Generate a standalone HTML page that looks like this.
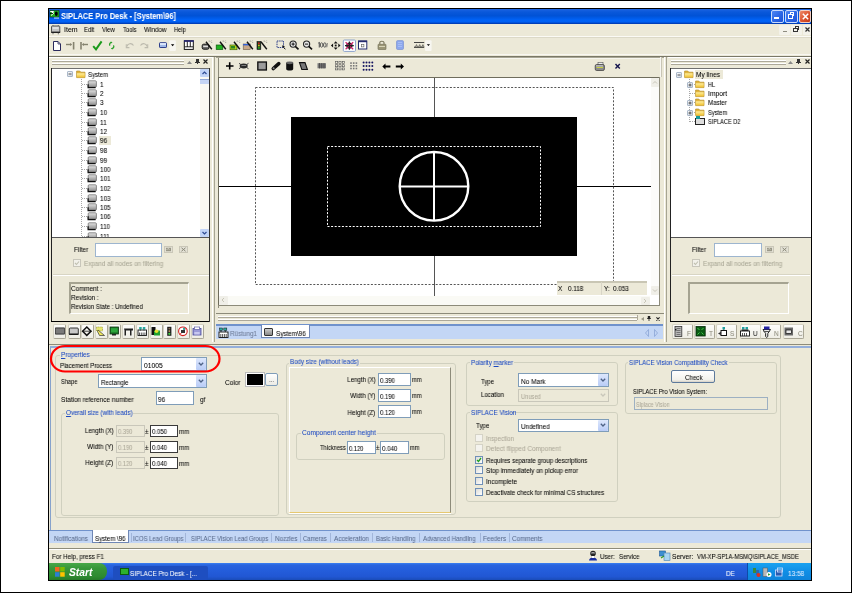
<!DOCTYPE html>
<html><head><meta charset="utf-8">
<style>
*{margin:0;padding:0;box-sizing:border-box}
html,body{width:852px;height:593px;overflow:hidden;background:#fff;font-family:"Liberation Sans",sans-serif;color:#000}
.a{position:absolute}
.t{position:absolute;white-space:nowrap;line-height:1;will-change:transform;-webkit-text-stroke:.05px currentColor}
svg{overflow:visible}
</style></head><body>
<div class="a" style="left:0;top:0;width:852px;height:593px;border:1px solid #000"></div>
<div class="a" style="left:48px;top:8px;width:764px;height:573px;background:#ECE9D8;border:1px solid #000"></div>
<div class="a" style="left:49px;top:9px;width:762px;height:15px;background:linear-gradient(#1C64E2 0,#0A58DA 20%,#0052D6 45%,#0062F6 72%,#0060F4 86%,#0040BC 96%,#0034A8 100%)"></div>
<svg class="a" style="left:49px;top:10px;" width="11" height="9" viewBox="0 0 11 9"><rect x="1" y=".6" width="9" height="6.4" fill="#22B022" stroke="#0A3A0A" stroke-width=".6"/><ellipse cx="7.3" cy="3.8" rx="1.5" ry="2.2" fill="#000"/><path d="M1.2 1.5H4.5L2.8 3H4.8L2 5.5" stroke="#fff" stroke-width="1" fill="none"/><path d="M1 3.5L4 3.5" stroke="#000" stroke-width=".8"/><rect x="5" y="7.6" width="5" height=".9" fill="#DDEEFF"/></svg>
<div class="t" style="left:61.2px;top:13.06px;font-size:8.2px;transform:scaleX(0.908);transform-origin:0 0;color:#fff;font-weight:bold">SIPLACE Pro Desk - [System\96]</div>
<div class="a" style="left:771px;top:10px;width:13px;height:13px;background:linear-gradient(135deg,#4E86F2,#2A66E6 55%,#1E52D4);border:1px solid #C8DAFC;border-radius:2px"></div>
<div class="a" style="left:785px;top:10px;width:13px;height:13px;background:linear-gradient(135deg,#4E86F2,#2A66E6 55%,#1E52D4);border:1px solid #C8DAFC;border-radius:2px"></div>
<div class="a" style="left:799px;top:10px;width:12px;height:13px;background:linear-gradient(135deg,#EC8A6A,#DD5530 55%,#C23A18);border:1px solid #F4D0C4;border-radius:2px"></div>
<div class="a" style="left:774px;top:17px;width:4.5px;height:2px;background:#fff"></div>
<div class="a" style="left:790px;top:12px;width:4px;height:4px;border:1px solid #fff;border-top-width:1px"></div>
<div class="a" style="left:788px;top:14px;width:4.5px;height:4.5px;background:#2A66E6;border:1px solid #fff;border-top-width:1px"></div>
<svg class="a" style="left:801px;top:12px;" width="9" height="9" viewBox="0 0 9 9"><path d="M1.8 1.8L7.2 7.2M7.2 1.8L1.8 7.2" stroke="#fff" stroke-width="1.5"/></svg>
<div class="a" style="left:49px;top:36px;width:762px;height:1px;background:#FBFAF5"></div>
<div class="a" style="left:49px;top:37px;width:762px;height:1px;background:#DCD9C8"></div>
<svg class="a" style="left:50px;top:24px;" width="11" height="11" viewBox="0 0 11 11"><rect x="1.5" y="2" width="8.3" height="6.5" rx=".8" fill="#C4C4C4" stroke="#555" stroke-width="1"/><rect x="1.2" y="7.6" width="9" height="1.4" fill="#222"/><path d="M3 1V2M8.3 1V2M3 9V10.3M8.3 9V10.3" stroke="#666" stroke-width=".9"/><rect x="2.6" y="3" width="6" height="2" fill="#E0E0E0"/></svg>
<div class="t" style="left:63.5px;top:26.07px;font-size:7px;transform:scaleX(0.999);transform-origin:0 0;">Item</div>
<div class="t" style="left:83.7px;top:26.07px;font-size:7px;transform:scaleX(0.854);transform-origin:0 0;">Edit</div>
<div class="t" style="left:102px;top:26.07px;font-size:7px;transform:scaleX(0.844);transform-origin:0 0;">View</div>
<div class="t" style="left:122.7px;top:26.07px;font-size:7px;transform:scaleX(0.832);transform-origin:0 0;">Tools</div>
<div class="t" style="left:144.3px;top:26.07px;font-size:7px;transform:scaleX(0.904);transform-origin:0 0;">Window</div>
<div class="t" style="left:173.8px;top:26.07px;font-size:7px;transform:scaleX(0.820);transform-origin:0 0;">Help</div>
<div class="a" style="left:779px;top:25px;width:11px;height:10px;background:#F3F2EA;border-radius:1px"></div>
<div class="a" style="left:791px;top:25px;width:11px;height:10px;background:#F3F2EA;border-radius:1px"></div>
<div class="a" style="left:803px;top:25px;width:8px;height:10px;background:#F3F2EA;border-radius:1px"></div>
<div class="a" style="left:783px;top:30.5px;width:3.5px;height:1px;background:#8E8C80"></div>
<div class="a" style="left:795px;top:26px;width:4px;height:4px;border:1px solid #333;border-top-width:1.5px"></div>
<div class="a" style="left:793px;top:27.5px;width:4.5px;height:4px;background:#F3F2EA;border:1px solid #333;border-top-width:1.5px"></div>
<svg class="a" style="left:804.5px;top:26.5px;" width="5" height="5" viewBox="0 0 5 5"><path d="M.5 .5L4.5 4.5M4.5 .5L.5 4.5" stroke="#333" stroke-width="1.2"/></svg>
<div class="a" style="left:49px;top:54px;width:762px;height:1px;background:#F8F7F2"></div>
<div class="a" style="left:49px;top:56px;width:762px;height:1px;background:#7A7868"></div>
<svg class="a" style="left:0;top:0" width="852" height="60" viewBox="0 0 852 60"><path d="M53.5 41.5H58L60.5 44V50.5H53.5Z" fill="#fff" stroke="#2B2B5E" stroke-width="1"/><path d="M58 41.5V44H60.5" fill="none" stroke="#2B2B5E" stroke-width=".8"/><path d="M66 44.5H71.5" stroke="#85836F" stroke-width="1.4"/><path d="M70 43L72 44.5L70 46Z" fill="#85836F"/><rect x="72.8" y="42" width="1.6" height="7.5" fill="#85836F"/><rect x="80.2" y="42" width="1.6" height="7.5" fill="#85836F"/><path d="M82.5 44.5H88" stroke="#85836F" stroke-width="1.4"/><path d="M84 43L82 44.5L84 46Z" fill="#85836F"/><path d="M93.2 46.2L96 49.3L101.6 41.4" fill="none" stroke="#1B9A1B" stroke-width="2"/><path d="M111.7 42.3C109.5 42.5 109.2 44.7 110 45.6M111.7 48.6C113.9 48.4 114.2 46.3 113.4 45.3" fill="none" stroke="#2AA02A" stroke-width="1.3"/><path d="M110.6 41.5L112.6 42.4L110.8 43.5Z M112.8 49.4L110.8 48.5L112.6 47.4Z" fill="#2AA02A"/><path d="M127 46.5C127.5 43.5 131.5 42.5 133.5 45.5" fill="none" stroke="#BDBBAE" stroke-width="1.2"/><path d="M126.3 44.3V47.6H129.4" fill="none" stroke="#BDBBAE" stroke-width="1.1"/><path d="M147 46.5C146.5 43.5 142.5 42.5 140.5 45.5" fill="none" stroke="#BDBBAE" stroke-width="1.2"/><path d="M147.7 44.3V47.6H144.6" fill="none" stroke="#BDBBAE" stroke-width="1.1"/><rect x="159.5" y="42.7" width="7" height="4.8" rx=".6" fill="#9FB8E8" stroke="#2E3F8A" stroke-width="1"/><rect x="160" y="43.2" width="6" height="1.6" fill="#E8F0FF"/><rect x="169.3" y="40.3" width="6.6" height="10.8" rx="1" fill="#F7F6F1"/><path d="M170.9 44.3H174.3L172.6 46.2Z" fill="#000"/><rect x="184.3" y="40.8" width="9" height="8.6" fill="#fff" stroke="#111" stroke-width="1"/><rect x="184" y="40.3" width="9.7" height="1.5" fill="#1E1E78"/><path d="M187.3 41.5V47M190.3 41.5V47M184.5 46.8H193" stroke="#111" stroke-width=".9"/><rect x="202.2" y="44.2" width="6.8" height="5" rx="1.5" fill="#6F6F6F" stroke="#111" stroke-width="1"/><rect x="203.2" y="45.7" width="4.8" height="1.3" fill="#ddd"/><path d="M206 41.8L211.8 49.3" stroke="#111" stroke-width="1.4"/><path d="M209.2 40.5V41.8M211.2 42.4H212.2M211.5 40.6L210.8 41.3" stroke="#666" stroke-width=".6"/><rect x="216.2" y="45" width="6.6" height="4.5" fill="#20B020" stroke="#0A5A0A" stroke-width=".7"/><path d="M220 41.8L225.8 49.3" stroke="#111" stroke-width="1.4"/><path d="M223.2 40.5V41.8M225.2 42.4H226.2M225.5 40.6L224.8 41.3" stroke="#666" stroke-width=".6"/><rect x="230" y="45" width="7" height="4.7" fill="#B8D020" stroke="#3A6A0A" stroke-width=".7"/><rect x="231" y="46" width="4" height="2.5" fill="#2B8A20"/><path d="M234 41.8L239.8 49.3" stroke="#111" stroke-width="1.4"/><path d="M237.2 40.5V41.8M239.2 42.4H240.2M239.5 40.6L238.8 41.3" stroke="#666" stroke-width=".6"/><rect x="243.2" y="44" width="7" height="5.6" fill="#C8A888" stroke="#6A5A4A" stroke-width=".6"/><rect x="243.2" y="44" width="7" height="1.4" fill="#3060D8"/><path d="M247 41.8L252.8 49.3" stroke="#111" stroke-width="1.4"/><path d="M250.2 40.5V41.8M252.2 42.4H253.2M252.5 40.6L251.8 41.3" stroke="#666" stroke-width=".6"/><rect x="257" y="41.5" width="3.8" height="8" fill="#1D3A1D" stroke="#111" stroke-width=".6"/><circle cx="258.9" cy="43.2" r=".9" fill="#D02020"/><circle cx="258.9" cy="45.5" r=".9" fill="#E0C020"/><circle cx="258.9" cy="47.8" r=".9" fill="#20C020"/><path d="M261 41.8L266.8 49.3" stroke="#111" stroke-width="1.4"/><path d="M264.2 40.5V41.8M266.2 42.4H267.2M266.5 40.6L265.8 41.3" stroke="#666" stroke-width=".6"/><rect x="277" y="41" width="6.5" height="6.5" fill="none" stroke="#2E3F8A" stroke-width="1" stroke-dasharray="1.4,.8"/><path d="M282.5 46L285.3 49.3" stroke="#111" stroke-width="1"/><path d="M282 45.3L285 46.5L283.2 47.6Z" fill="#111"/><circle cx="293.1" cy="44.1" r="3.1" fill="#E8E8E8" stroke="#222" stroke-width="1.1"/><path d="M295.3 46.4L298.5 49.4" stroke="#111" stroke-width="1.7"/><path d="M291.5 44.1H294.7" stroke="#111" stroke-width="1"/><path d="M293.1 42.5V45.7" stroke="#111" stroke-width="1"/><circle cx="306.6" cy="44.1" r="3.1" fill="#E8E8E8" stroke="#222" stroke-width="1.1"/><path d="M308.8 46.4L312 49.4" stroke="#111" stroke-width="1.7"/><path d="M305 44.1H308.2" stroke="#111" stroke-width="1"/><path d="M318.3 43.2L319.3 42.6V47.5" stroke="#555" stroke-width="1.1" fill="none"/><ellipse cx="321.6" cy="45" rx="1.3" ry="2.2" fill="none" stroke="#555" stroke-width="1"/><ellipse cx="324.8" cy="45" rx="1.3" ry="2.2" fill="none" stroke="#555" stroke-width="1"/><path d="M326.8 47.3L327.4 43" stroke="#555" stroke-width=".7"/><path d="M335.7 41.3L337.7 43.5H333.7Z M335.7 49.7L337.7 47.5H333.7Z M330.9 45.5L333.1 43.5V47.5Z M340.5 45.5L338.3 43.5V47.5Z" fill="#111"/><rect x="334.8" y="44.6" width="1.8" height="1.8" fill="#111"/><rect x="343.3" y="40" width="12.2" height="11.4" rx="1" fill="#fff" stroke="#8BA2CC" stroke-width="1"/><circle cx="349.4" cy="45.6" r="3.2" fill="#222"/><path d="M345.6 42.2L353.2 49.2M353.2 42.2L345.6 49.2" stroke="#D0206A" stroke-width="1.2"/><path d="M349.4 41.4V49.8M345 45.6H353.8" stroke="#222" stroke-width="1.2"/><rect x="358.5" y="41" width="8.3" height="8" fill="#fff" stroke="#232A6E" stroke-width="1"/><rect x="358.3" y="40.6" width="8.7" height="1.6" fill="#232A6E"/><rect x="361.3" y="44.3" width="2.6" height="2.6" fill="none" stroke="#555" stroke-width=".6"/><path d="M379.8 44.5V42.6C379.8 40.8 384 40.8 384 42.6V44.5" fill="none" stroke="#7D7A60" stroke-width="1.2"/><rect x="378" y="44.3" width="8" height="5.2" rx=".5" fill="#9C9777" stroke="#6D6A50" stroke-width=".6"/><rect x="379" y="46" width="6" height="1" fill="#D8D4B8"/><rect x="396.5" y="40.6" width="7" height="8.9" rx="1.2" fill="#8DA8EE" stroke="#7C93D0" stroke-width=".7"/><path d="M398 42.5H402M398 44.5H402M398 46.5H402" stroke="#B8CBF7" stroke-width=".6"/><rect x="414" y="42" width="10.2" height="1" fill="#444"/><rect x="414" y="46.7" width="10.2" height="1" fill="#111"/><path d="M415.5 46.7L416.5 44.6L417.5 46.7M418.7 46.7L419.7 44.6L420.7 46.7M421.9 46.7L422.9 44.6L423.9 46.7" fill="none" stroke="#333" stroke-width=".6"/><rect x="425" y="40.3" width="6.6" height="10.7" rx="1" fill="#F7F6F1"/><path d="M426.8 44.3H430L428.4 46.1Z" fill="#000"/></svg>
<div class="a" style="left:49px;top:57px;width:163px;height:1px;background:#FFFFFF"></div>
<div class="a" style="left:52px;top:60px;width:132px;height:1px;background:#FFFFFF"></div>
<div class="a" style="left:52px;top:61px;width:132px;height:1px;background:#ACA899"></div>
<div class="a" style="left:52px;top:63px;width:132px;height:1px;background:#FFFFFF"></div>
<div class="a" style="left:52px;top:64px;width:132px;height:1px;background:#ACA899"></div>
<svg class="a" style="left:187px;top:61px;" width="5" height="3" viewBox="0 0 5 3"><path d="M0 3L2.5 0L5 3Z" fill="#888"/></svg>
<svg class="a" style="left:195px;top:59px;" width="5" height="5" viewBox="0 0 5 5"><path d="M1 0H4V3H5V4H3V5H2V4H0V3H1Z" fill="#333"/></svg>
<svg class="a" style="left:203px;top:59px;" width="5" height="5" viewBox="0 0 5 5"><path d="M.5 .5L4.5 4.5M4.5 .5L.5 4.5" stroke="#222" stroke-width="1.2"/></svg>
<div class="a" style="left:51px;top:68px;width:159px;height:170px;background:#fff;border-top:1px solid #6F6F6F;border-left:1px solid #222;border-right:1px solid #777"></div>
<div class="a" style="left:200px;top:69px;width:9px;height:168px;background:#FAF9F3"></div>
<div class="a" style="left:200px;top:69px;width:9px;height:8px;background:#C2D4F7;border-radius:1px"></div>
<svg class="a" style="left:201px;top:70px;" width="7" height="6" viewBox="0 0 7 6"><path d="M1.5 4L3.5 2L5.5 4" stroke="#2E4C95" stroke-width="1.2" fill="none"/></svg>
<div class="a" style="left:200px;top:79px;width:9px;height:5px;background:#C5D5F5;border-top:1px solid #8FA6D6"></div>
<div class="a" style="left:200px;top:229px;width:9px;height:8px;background:#C2D4F7;border-radius:1px"></div>
<svg class="a" style="left:201px;top:230px;" width="7" height="6" viewBox="0 0 7 6"><path d="M1.5 2L3.5 4L5.5 2" stroke="#2E4C95" stroke-width="1.2" fill="none"/></svg>
<svg width="0" height="0" style="position:absolute"><defs><linearGradient id="fg" x1="0" y1="0" x2="0" y2="1"><stop offset="0" stop-color="#FFF0A0"/><stop offset="1" stop-color="#F0C030"/></linearGradient><linearGradient id="mg" x1="0" y1="0" x2="0" y2="1"><stop offset="0" stop-color="#E4E4E4"/><stop offset="1" stop-color="#8C8C8C"/></linearGradient><linearGradient id="pg" x1="0" y1="0" x2="1" y2="1"><stop offset="0" stop-color="#FFFFFF"/><stop offset="1" stop-color="#C8D0DC"/></linearGradient></defs></svg>
<svg class="a" style="left:67px;top:71px;" width="6" height="6" viewBox="0 0 6 6"><rect x=".5" y=".5" width="5" height="5" rx=".5" fill="url(#pg)" stroke="#98A8BC" stroke-width=".8"/><path d="M1.5 3H4.5" stroke="#444" stroke-width=".9"/></svg>
<svg class="a" style="left:76px;top:70px;" width="9" height="8" viewBox="0 0 9 8"><path d="M.6 1H3.8L4.8 2.2H9V7.6H.6Z" fill="#E2B53C" stroke="#B8902A" stroke-width=".7"/><path d="M.9 3.3H8.7V7.3H.9Z" fill="url(#fg)"/></svg>
<div class="t" style="left:88.3px;top:72.21px;font-size:6.6px;transform:scaleX(0.913);transform-origin:0 0;">System</div>
<div class="a" style="left:81px;top:79px;width:1px;height:158px;background:repeating-linear-gradient(#A8A8A8 0 1px,transparent 1px 2px)"></div>
<div class="a" style="left:82px;top:84px;width:5px;height:1px;background:repeating-linear-gradient(90deg,#A8A8A8 0 1px,transparent 1px 2px)"></div>
<svg class="a" style="left:87px;top:80px;" width="10" height="9" viewBox="0 0 10 9"><rect x="1.2" y=".8" width="8.2" height="6.4" rx="1" fill="url(#mg)" stroke="#606060" stroke-width=".7"/><path d="M1.1 4.3V7.6H8.6" fill="none" stroke="#111" stroke-width="1.2"/></svg>
<div class="t" style="left:99.5px;top:82.41px;font-size:6.6px;transform:scaleX(0.955);transform-origin:0 0;">1</div>
<div class="a" style="left:82px;top:93px;width:5px;height:1px;background:repeating-linear-gradient(90deg,#A8A8A8 0 1px,transparent 1px 2px)"></div>
<svg class="a" style="left:87px;top:89px;" width="10" height="9" viewBox="0 0 10 9"><rect x="1.2" y=".8" width="8.2" height="6.4" rx="1" fill="url(#mg)" stroke="#606060" stroke-width=".7"/><path d="M1.1 4.3V7.6H8.6" fill="none" stroke="#111" stroke-width="1.2"/></svg>
<div class="t" style="left:99.5px;top:91.41px;font-size:6.6px;transform:scaleX(0.955);transform-origin:0 0;">2</div>
<div class="a" style="left:82px;top:102px;width:5px;height:1px;background:repeating-linear-gradient(90deg,#A8A8A8 0 1px,transparent 1px 2px)"></div>
<svg class="a" style="left:87px;top:98px;" width="10" height="9" viewBox="0 0 10 9"><rect x="1.2" y=".8" width="8.2" height="6.4" rx="1" fill="url(#mg)" stroke="#606060" stroke-width=".7"/><path d="M1.1 4.3V7.6H8.6" fill="none" stroke="#111" stroke-width="1.2"/></svg>
<div class="t" style="left:99.5px;top:100.41px;font-size:6.6px;transform:scaleX(0.955);transform-origin:0 0;">3</div>
<div class="a" style="left:82px;top:112px;width:5px;height:1px;background:repeating-linear-gradient(90deg,#A8A8A8 0 1px,transparent 1px 2px)"></div>
<svg class="a" style="left:87px;top:108px;" width="10" height="9" viewBox="0 0 10 9"><rect x="1.2" y=".8" width="8.2" height="6.4" rx="1" fill="url(#mg)" stroke="#606060" stroke-width=".7"/><path d="M1.1 4.3V7.6H8.6" fill="none" stroke="#111" stroke-width="1.2"/></svg>
<div class="t" style="left:99.5px;top:110.41px;font-size:6.6px;transform:scaleX(0.955);transform-origin:0 0;">10</div>
<div class="a" style="left:82px;top:122px;width:5px;height:1px;background:repeating-linear-gradient(90deg,#A8A8A8 0 1px,transparent 1px 2px)"></div>
<svg class="a" style="left:87px;top:118px;" width="10" height="9" viewBox="0 0 10 9"><rect x="1.2" y=".8" width="8.2" height="6.4" rx="1" fill="url(#mg)" stroke="#606060" stroke-width=".7"/><path d="M1.1 4.3V7.6H8.6" fill="none" stroke="#111" stroke-width="1.2"/></svg>
<div class="t" style="left:99.5px;top:120.41px;font-size:6.6px;transform:scaleX(0.955);transform-origin:0 0;">11</div>
<div class="a" style="left:82px;top:131px;width:5px;height:1px;background:repeating-linear-gradient(90deg,#A8A8A8 0 1px,transparent 1px 2px)"></div>
<svg class="a" style="left:87px;top:127px;" width="10" height="9" viewBox="0 0 10 9"><rect x="1.2" y=".8" width="8.2" height="6.4" rx="1" fill="url(#mg)" stroke="#606060" stroke-width=".7"/><path d="M1.1 4.3V7.6H8.6" fill="none" stroke="#111" stroke-width="1.2"/></svg>
<div class="t" style="left:99.5px;top:129.41px;font-size:6.6px;transform:scaleX(0.955);transform-origin:0 0;">12</div>
<div class="a" style="left:82px;top:140px;width:5px;height:1px;background:repeating-linear-gradient(90deg,#A8A8A8 0 1px,transparent 1px 2px)"></div>
<div class="a" style="left:98.5px;top:136px;width:12px;height:9px;background:#ECE9D8"></div>
<svg class="a" style="left:87px;top:136px;" width="10" height="9" viewBox="0 0 10 9"><rect x="1.2" y=".8" width="8.2" height="6.4" rx="1" fill="url(#mg)" stroke="#606060" stroke-width=".7"/><path d="M1.1 4.3V7.6H8.6" fill="none" stroke="#111" stroke-width="1.2"/></svg>
<div class="t" style="left:99.5px;top:138.41px;font-size:6.6px;transform:scaleX(0.955);transform-origin:0 0;">96</div>
<div class="a" style="left:82px;top:150px;width:5px;height:1px;background:repeating-linear-gradient(90deg,#A8A8A8 0 1px,transparent 1px 2px)"></div>
<svg class="a" style="left:87px;top:146px;" width="10" height="9" viewBox="0 0 10 9"><rect x="1.2" y=".8" width="8.2" height="6.4" rx="1" fill="url(#mg)" stroke="#606060" stroke-width=".7"/><path d="M1.1 4.3V7.6H8.6" fill="none" stroke="#111" stroke-width="1.2"/></svg>
<div class="t" style="left:99.5px;top:148.41px;font-size:6.6px;transform:scaleX(0.955);transform-origin:0 0;">98</div>
<div class="a" style="left:82px;top:160px;width:5px;height:1px;background:repeating-linear-gradient(90deg,#A8A8A8 0 1px,transparent 1px 2px)"></div>
<svg class="a" style="left:87px;top:156px;" width="10" height="9" viewBox="0 0 10 9"><rect x="1.2" y=".8" width="8.2" height="6.4" rx="1" fill="url(#mg)" stroke="#606060" stroke-width=".7"/><path d="M1.1 4.3V7.6H8.6" fill="none" stroke="#111" stroke-width="1.2"/></svg>
<div class="t" style="left:99.5px;top:158.41px;font-size:6.6px;transform:scaleX(0.955);transform-origin:0 0;">99</div>
<div class="a" style="left:82px;top:169px;width:5px;height:1px;background:repeating-linear-gradient(90deg,#A8A8A8 0 1px,transparent 1px 2px)"></div>
<svg class="a" style="left:87px;top:165px;" width="10" height="9" viewBox="0 0 10 9"><rect x="1.2" y=".8" width="8.2" height="6.4" rx="1" fill="url(#mg)" stroke="#606060" stroke-width=".7"/><path d="M1.1 4.3V7.6H8.6" fill="none" stroke="#111" stroke-width="1.2"/></svg>
<div class="t" style="left:99.5px;top:167.41px;font-size:6.6px;transform:scaleX(0.955);transform-origin:0 0;">100</div>
<div class="a" style="left:82px;top:178px;width:5px;height:1px;background:repeating-linear-gradient(90deg,#A8A8A8 0 1px,transparent 1px 2px)"></div>
<svg class="a" style="left:87px;top:174px;" width="10" height="9" viewBox="0 0 10 9"><rect x="1.2" y=".8" width="8.2" height="6.4" rx="1" fill="url(#mg)" stroke="#606060" stroke-width=".7"/><path d="M1.1 4.3V7.6H8.6" fill="none" stroke="#111" stroke-width="1.2"/></svg>
<div class="t" style="left:99.5px;top:176.41px;font-size:6.6px;transform:scaleX(0.955);transform-origin:0 0;">101</div>
<div class="a" style="left:82px;top:188px;width:5px;height:1px;background:repeating-linear-gradient(90deg,#A8A8A8 0 1px,transparent 1px 2px)"></div>
<svg class="a" style="left:87px;top:184px;" width="10" height="9" viewBox="0 0 10 9"><rect x="1.2" y=".8" width="8.2" height="6.4" rx="1" fill="url(#mg)" stroke="#606060" stroke-width=".7"/><path d="M1.1 4.3V7.6H8.6" fill="none" stroke="#111" stroke-width="1.2"/></svg>
<div class="t" style="left:99.5px;top:186.41px;font-size:6.6px;transform:scaleX(0.955);transform-origin:0 0;">102</div>
<div class="a" style="left:82px;top:198px;width:5px;height:1px;background:repeating-linear-gradient(90deg,#A8A8A8 0 1px,transparent 1px 2px)"></div>
<svg class="a" style="left:87px;top:194px;" width="10" height="9" viewBox="0 0 10 9"><rect x="1.2" y=".8" width="8.2" height="6.4" rx="1" fill="url(#mg)" stroke="#606060" stroke-width=".7"/><path d="M1.1 4.3V7.6H8.6" fill="none" stroke="#111" stroke-width="1.2"/></svg>
<div class="t" style="left:99.5px;top:196.41px;font-size:6.6px;transform:scaleX(0.955);transform-origin:0 0;">103</div>
<div class="a" style="left:82px;top:207px;width:5px;height:1px;background:repeating-linear-gradient(90deg,#A8A8A8 0 1px,transparent 1px 2px)"></div>
<svg class="a" style="left:87px;top:203px;" width="10" height="9" viewBox="0 0 10 9"><rect x="1.2" y=".8" width="8.2" height="6.4" rx="1" fill="url(#mg)" stroke="#606060" stroke-width=".7"/><path d="M1.1 4.3V7.6H8.6" fill="none" stroke="#111" stroke-width="1.2"/></svg>
<div class="t" style="left:99.5px;top:205.41px;font-size:6.6px;transform:scaleX(0.955);transform-origin:0 0;">105</div>
<div class="a" style="left:82px;top:216px;width:5px;height:1px;background:repeating-linear-gradient(90deg,#A8A8A8 0 1px,transparent 1px 2px)"></div>
<svg class="a" style="left:87px;top:212px;" width="10" height="9" viewBox="0 0 10 9"><rect x="1.2" y=".8" width="8.2" height="6.4" rx="1" fill="url(#mg)" stroke="#606060" stroke-width=".7"/><path d="M1.1 4.3V7.6H8.6" fill="none" stroke="#111" stroke-width="1.2"/></svg>
<div class="t" style="left:99.5px;top:214.41px;font-size:6.6px;transform:scaleX(0.955);transform-origin:0 0;">106</div>
<div class="a" style="left:82px;top:226px;width:5px;height:1px;background:repeating-linear-gradient(90deg,#A8A8A8 0 1px,transparent 1px 2px)"></div>
<svg class="a" style="left:87px;top:222px;" width="10" height="9" viewBox="0 0 10 9"><rect x="1.2" y=".8" width="8.2" height="6.4" rx="1" fill="url(#mg)" stroke="#606060" stroke-width=".7"/><path d="M1.1 4.3V7.6H8.6" fill="none" stroke="#111" stroke-width="1.2"/></svg>
<div class="t" style="left:99.5px;top:224.41px;font-size:6.6px;transform:scaleX(0.955);transform-origin:0 0;">110</div>
<div class="a" style="left:82px;top:236px;width:5px;height:1px;background:repeating-linear-gradient(90deg,#A8A8A8 0 1px,transparent 1px 2px)"></div>
<svg class="a" style="left:87px;top:232px;" width="10" height="9" viewBox="0 0 10 9"><rect x="1.2" y=".8" width="8.2" height="6.4" rx="1" fill="url(#mg)" stroke="#606060" stroke-width=".7"/><path d="M1.1 4.3V7.6H8.6" fill="none" stroke="#111" stroke-width="1.2"/></svg>
<div class="t" style="left:99.5px;top:234.41px;font-size:6.6px;transform:scaleX(0.955);transform-origin:0 0;">111</div>
<div class="a" style="left:52px;top:238px;width:157px;height:5px;background:#ECE9D8"></div>
<div class="a" style="left:51px;top:237px;width:159px;height:1px;background:#555"></div>
<div class="t" style="left:73.8px;top:247.21px;font-size:6.6px;transform:scaleX(0.961);transform-origin:0 0;">Filter</div>
<div class="a" style="left:95px;top:243px;width:67px;height:14px;background:#fff;border:1px solid #9DB5CF"></div>
<div class="a" style="left:164px;top:246px;width:9px;height:7px;background:#E2E0D4;border:1px solid #CAC7B8"></div>
<div class="a" style="left:179px;top:246px;width:9px;height:7px;background:#E2E0D4;border:1px solid #CAC7B8"></div>
<svg class="a" style="left:165px;top:247px;" width="7" height="5" viewBox="0 0 7 5"><rect x="1" y=".8" width="5" height="3.4" fill="#9A9888"/><path d="M1.5 3L3 1.5L4.5 2.5" stroke="#E8E6DA" stroke-width=".7" fill="none"/></svg>
<svg class="a" style="left:180px;top:247px;" width="7" height="5" viewBox="0 0 7 5"><path d="M1.5 .8L5.5 4.2M5.5 .8L1.5 4.2" stroke="#8A8878" stroke-width="1"/></svg>
<div class="a" style="left:73px;top:259px;width:8px;height:8px;border:1px solid #C8C6BA;background:#F2F1EA"></div>
<svg class="a" style="left:74px;top:260px;" width="6" height="6" viewBox="0 0 6 6"><path d="M1 3L2.5 4.5L5 1.5" stroke="#C0C0B0" stroke-width="1.1" fill="none"/></svg>
<div class="t" style="left:83.8px;top:260.71px;font-size:6.6px;transform:scaleX(0.955);transform-origin:0 0;color:#A9A796">Expand all nodes on filtering</div>
<div class="a" style="left:53px;top:274px;width:156px;height:1px;background:#D8D5C4"></div>
<div class="a" style="left:53px;top:275px;width:156px;height:1px;background:#FFFFFF"></div>
<div class="a" style="left:69px;top:282px;width:120px;height:32px;border-style:solid;border-width:2px 1px 1px 2px;border-color:#A5A391 #FFFFFF #FFFFFF #A5A391"></div>
<div class="t" style="left:70.8px;top:286.21px;font-size:6.6px;transform:scaleX(0.955);transform-origin:0 0;">Comment :</div>
<div class="t" style="left:70.8px;top:295.21px;font-size:6.6px;transform:scaleX(0.955);transform-origin:0 0;">Revision :</div>
<div class="t" style="left:70.8px;top:303.91px;font-size:6.6px;transform:scaleX(0.919);transform-origin:0 0;">Revision State : Undefined</div>
<div class="a" style="left:51px;top:68px;width:1px;height:254px;background:#222"></div>
<div class="a" style="left:51px;top:321px;width:159px;height:1px;background:#000"></div>
<div class="a" style="left:209px;top:68px;width:1px;height:254px;background:#333"></div>
<div class="a" style="left:53px;top:324px;width:13px;height:15px;background:linear-gradient(#FDFDFB,#EEEDE5);border:1px solid #D5D2C3;border-right-color:#A9A696;border-bottom-color:#A9A696;border-radius:2px"></div>
<div class="a" style="left:68px;top:324px;width:13px;height:15px;background:linear-gradient(#FDFDFB,#EEEDE5);border:1px solid #D5D2C3;border-right-color:#A9A696;border-bottom-color:#A9A696;border-radius:2px"></div>
<div class="a" style="left:81px;top:324px;width:13px;height:15px;background:linear-gradient(#FDFDFB,#EEEDE5);border:1px solid #D5D2C3;border-right-color:#A9A696;border-bottom-color:#A9A696;border-radius:2px"></div>
<div class="a" style="left:95px;top:324px;width:13px;height:15px;background:linear-gradient(#FDFDFB,#EEEDE5);border:1px solid #D5D2C3;border-right-color:#A9A696;border-bottom-color:#A9A696;border-radius:2px"></div>
<div class="a" style="left:108px;top:324px;width:13px;height:15px;background:linear-gradient(#FDFDFB,#EEEDE5);border:1px solid #D5D2C3;border-right-color:#A9A696;border-bottom-color:#A9A696;border-radius:2px"></div>
<div class="a" style="left:122px;top:324px;width:13px;height:15px;background:linear-gradient(#FDFDFB,#EEEDE5);border:1px solid #D5D2C3;border-right-color:#A9A696;border-bottom-color:#A9A696;border-radius:2px"></div>
<div class="a" style="left:136px;top:324px;width:13px;height:15px;background:linear-gradient(#FDFDFB,#EEEDE5);border:1px solid #D5D2C3;border-right-color:#A9A696;border-bottom-color:#A9A696;border-radius:2px"></div>
<div class="a" style="left:150px;top:324px;width:13px;height:15px;background:linear-gradient(#FDFDFB,#EEEDE5);border:1px solid #D5D2C3;border-right-color:#A9A696;border-bottom-color:#A9A696;border-radius:2px"></div>
<div class="a" style="left:163px;top:324px;width:13px;height:15px;background:linear-gradient(#FDFDFB,#EEEDE5);border:1px solid #D5D2C3;border-right-color:#A9A696;border-bottom-color:#A9A696;border-radius:2px"></div>
<div class="a" style="left:177px;top:324px;width:13px;height:15px;background:linear-gradient(#FDFDFB,#EEEDE5);border:1px solid #D5D2C3;border-right-color:#A9A696;border-bottom-color:#A9A696;border-radius:2px"></div>
<div class="a" style="left:191px;top:324px;width:13px;height:15px;background:linear-gradient(#FDFDFB,#EEEDE5);border:1px solid #D5D2C3;border-right-color:#A9A696;border-bottom-color:#A9A696;border-radius:2px"></div>
<svg class="a" style="left:0;top:0" width="852" height="593" viewBox="0 0 852 593"><rect x="55.5" y="328" width="9" height="6" fill="#7A7A7A" stroke="#333" stroke-width=".8"/><path d="M57 327V328M59 327V328M61 327V328M63 327V328M57 334V335M59 334V335M61 334V335M63 334V335" stroke="#555" stroke-width=".8"/><rect x="69.3" y="328" width="9" height="6.5" rx="1" fill="#C8C8C8" stroke="#222" stroke-width=".9"/><rect x="69" y="333.5" width="9.6" height="1.3" fill="#111"/><path d="M86.8 327L91 331.2L86.8 335.4L82.6 331.2Z" fill="none" stroke="#111" stroke-width="1.5"/><path d="M82 331.2H91.6" stroke="#111" stroke-width=".8"/><rect x="96.5" y="327" width="6" height="4" fill="#E8E870" stroke="#8A8A20" stroke-width=".6" stroke-dasharray="1,.6"/><path d="M98 330L104.5 335.5H99.5L97.5 331.5Z" fill="#F0E860" stroke="#333" stroke-width=".7"/><rect x="110" y="327" width="8.5" height="7" fill="#1E7A2A" stroke="#0B300E" stroke-width=".8"/><rect x="111" y="328.2" width="6.5" height="4" fill="#2CA63C"/><rect x="112" y="334" width="4" height="1.5" fill="#222"/><path d="M124 328.5H133V330.5H131.5V335.5H130V330.5H126V335.5H124.5V330.5Z" fill="#222"/><rect x="138" y="330" width="8.5" height="5.5" fill="#fff" stroke="#111" stroke-width=".9"/><path d="M139.5 332.5V335M141.3 332.5V335M143.1 332.5V335M144.9 332.5V335" stroke="#111" stroke-width=".7"/><rect x="139.2" y="327" width="2.5" height="2.5" fill="#2AAAA0"/><rect x="142.8" y="327" width="2.5" height="2.5" fill="#2AAAA0"/><path d="M140.4 329.5V330.5M144 329.5V330.5" stroke="#111" stroke-width=".8"/><rect x="151.5" y="327" width="4" height="8" fill="#111"/><rect x="154" y="330.5" width="6" height="5" fill="#20A030"/><circle cx="156.5" cy="331.2" r="1.8" fill="#E8E030"/><rect x="167.2" y="326.8" width="4.2" height="9" fill="#222"/><circle cx="169.3" cy="328.6" r=".9" fill="#8A6A50"/><circle cx="169.3" cy="331.1" r=".9" fill="#C0A060"/><circle cx="169.3" cy="333.8" r="1.1" fill="#40D040"/><circle cx="182.9" cy="331.3" r="4.3" fill="#fff" stroke="#D42020" stroke-width="1.1"/><path d="M180 334.3L186 328.3" stroke="#D42020" stroke-width="1"/><rect x="181" y="330" width="4" height="3" fill="#333"/><rect x="183" y="327.8" width="2" height="2" fill="#2AAAA0"/><rect x="193" y="328.5" width="8" height="6.5" fill="#9A9AD8" stroke="#4A4A9A" stroke-width=".8"/><rect x="194.3" y="327" width="5.4" height="2.5" fill="#fff" stroke="#4A4A9A" stroke-width=".6"/><rect x="194.3" y="332" width="5.4" height="2.5" fill="#C8C8F0"/></svg>
<div class="a" style="left:214px;top:57px;width:1px;height:285px;background:#A6A493"></div>
<div class="a" style="left:212px;top:57px;width:1px;height:285px;background:#FFFFFF"></div>
<div class="a" style="left:216px;top:57px;width:448px;height:20px;background:#ECE9D8"></div>
<div class="a" style="left:216px;top:57px;width:448px;height:1px;background:#A9A795"></div>
<div class="a" style="left:218px;top:58px;width:442px;height:1px;background:#F6F5EE"></div>
<div class="a" style="left:218px;top:58px;width:1px;height:250px;background:#8D8B7A"></div>
<div class="a" style="left:660px;top:57px;width:1px;height:20px;background:#F8F7F2"></div>
<div class="a" style="left:661px;top:57px;width:1px;height:20px;background:#C8C5B5"></div>
<div class="a" style="left:218px;top:77px;width:442px;height:229px;background:#fff;border-top:1px solid #6F6D5D;border-left:1px solid #6F6D5D;border-right:1px solid #fff;border-bottom:1px solid #fff"></div>
<div class="a" style="left:218px;top:305px;width:442px;height:1px;background:#8D8B7A"></div>
<div class="a" style="left:659px;top:77px;width:1px;height:229px;background:#8D8B7A"></div>
<svg class="a" style="left:0;top:0" width="852" height="593" viewBox="0 0 852 593"><line x1="219" y1="186.5" x2="651" y2="186.5" stroke="#000" stroke-width="1"/><line x1="434.5" y1="78" x2="434.5" y2="296" stroke="#555" stroke-width="1"/><rect x="291" y="117" width="286" height="139" fill="#000"/><rect x="255.5" y="87.5" width="358" height="197" fill="none" stroke="#555" stroke-width="1" stroke-dasharray="2,1.6"/><rect x="327.5" y="146.5" width="213" height="80" fill="none" stroke="#fff" stroke-width="1" stroke-dasharray="2,1.6"/><circle cx="434" cy="186.3" r="34.3" fill="none" stroke="#fff" stroke-width="2.4"/><line x1="399" y1="186.5" x2="469" y2="186.5" stroke="#fff" stroke-width="2"/><line x1="434" y1="151" x2="434" y2="221" stroke="#fff" stroke-width="2"/></svg>
<div class="a" style="left:557px;top:281px;width:90px;height:14px;background:#ECE9D8;border-top:2px solid #C9C6B4"></div>
<div class="a" style="left:601px;top:282px;width:1px;height:13px;background:#D8D5C6"></div>
<div class="t" style="left:558.3px;top:286.21px;font-size:6.6px;transform:scaleX(0.955);transform-origin:0 0;">X</div>
<div class="t" style="left:568px;top:286.21px;font-size:6.6px;transform:scaleX(0.955);transform-origin:0 0;">0.118</div>
<div class="t" style="left:603.8px;top:286.21px;font-size:6.6px;transform:scaleX(0.955);transform-origin:0 0;">Y:</div>
<div class="t" style="left:612.6px;top:286.21px;font-size:6.6px;transform:scaleX(0.955);transform-origin:0 0;">0.053</div>
<div class="a" style="left:219px;top:296px;width:431px;height:9px;background:#FAFAF5"></div>
<div class="a" style="left:219px;top:296px;width:9px;height:9px;background:#F0EFE8;border-radius:1px"></div>
<div class="a" style="left:641px;top:297px;width:9px;height:8px;background:#F0EFE8;border-radius:1px"></div>
<div class="a" style="left:651px;top:78px;width:8px;height:217px;background:#FCFCFA"></div>
<div class="a" style="left:651px;top:286px;width:8px;height:9px;background:#F0EFE8;border-radius:1px"></div>
<div class="a" style="left:651px;top:78px;width:8px;height:9px;background:#F0EFE8;border-radius:1px"></div>
<svg class="a" style="left:652px;top:80px;" width="6" height="5" viewBox="0 0 6 5"><path d="M1 3.5L3 1.5L5 3.5" stroke="#C8C6B8" stroke-width="1" fill="none"/></svg>
<svg class="a" style="left:652px;top:288px;" width="6" height="5" viewBox="0 0 6 5"><path d="M1 1.5L3 3.5L5 1.5" stroke="#C8C6B8" stroke-width="1" fill="none"/></svg>
<svg class="a" style="left:642px;top:298px;" width="6" height="6" viewBox="0 0 6 6"><path d="M2 1L4 3L2 5" stroke="#C8C6B8" stroke-width="1" fill="none"/></svg>
<svg class="a" style="left:220px;top:297px;" width="6" height="6" viewBox="0 0 6 6"><path d="M4 1L2 3L4 5" stroke="#C8C6B8" stroke-width="1" fill="none"/></svg>
<svg class="a" style="left:0;top:0" width="852" height="80" viewBox="0 0 852 80"><path d="M229.7 62.3V69.6M226 66H233.5" stroke="#000" stroke-width="1.6"/><ellipse cx="243.7" cy="66" rx="4" ry="2.4" fill="#2A2A2A"/><path d="M239 63.3L241.5 65M248.5 63.3L246 65M239 68.7L241.5 67M248.5 68.7L246 67" stroke="#444" stroke-width="1"/><rect x="241.5" y="65" width="4.5" height=".9" fill="#888"/><rect x="257.8" y="62" width="8.6" height="8" fill="#8A8A8A" stroke="#111" stroke-width="1.3"/><rect x="259" y="63.2" width="6.2" height="5.6" fill="#9C9C9C"/><path d="M273.3 68.5L278.8 63.6" stroke="#111" stroke-width="3.6" stroke-linecap="round"/><circle cx="273.6" cy="68.2" r="1" fill="#888"/><path d="M286.2 62.8V69C286.2 71 293.2 71 293.2 69V62.8Z" fill="#111"/><ellipse cx="289.7" cy="62.8" rx="3.5" ry="1.4" fill="#666"/><path d="M299.5 62.6H305L307.4 69.5H301.8Z" fill="#777" stroke="#111" stroke-width="1.1"/><path d="M317.5 63.2H326V68.3H317.5Z" fill="#777"/><path d="M319.6 63V68.5M321.8 63V68.5M324 63V68.5" stroke="#333" stroke-width=".7"/><rect x="335.5" y="61.5" width="2.2" height="2" fill="none" stroke="#555" stroke-width=".6"/><rect x="338.9" y="61.5" width="2.2" height="2" fill="none" stroke="#555" stroke-width=".6"/><rect x="342.3" y="61.5" width="2.2" height="2" fill="none" stroke="#555" stroke-width=".6"/><rect x="335.5" y="64.7" width="2.2" height="2" fill="none" stroke="#555" stroke-width=".6"/><rect x="338.9" y="64.7" width="2.2" height="2" fill="none" stroke="#555" stroke-width=".6"/><rect x="342.3" y="64.7" width="2.2" height="2" fill="none" stroke="#555" stroke-width=".6"/><rect x="335.5" y="67.9" width="2.2" height="2" fill="none" stroke="#555" stroke-width=".6"/><rect x="338.9" y="67.9" width="2.2" height="2" fill="none" stroke="#555" stroke-width=".6"/><rect x="342.3" y="67.9" width="2.2" height="2" fill="none" stroke="#555" stroke-width=".6"/><rect x="350.2" y="62.3" width="1.6" height="1.6" fill="#777"/><rect x="352.9" y="62.3" width="1.6" height="1.6" fill="#777"/><rect x="355.6" y="62.3" width="1.6" height="1.6" fill="#777"/><rect x="350.2" y="65.0" width="1.6" height="1.6" fill="#777"/><rect x="352.9" y="65.0" width="1.6" height="1.6" fill="#777"/><rect x="355.6" y="65.0" width="1.6" height="1.6" fill="#777"/><rect x="350.2" y="67.7" width="1.6" height="1.6" fill="#777"/><rect x="352.9" y="67.7" width="1.6" height="1.6" fill="#777"/><rect x="355.6" y="67.7" width="1.6" height="1.6" fill="#777"/><circle cx="363.6" cy="62.5" r="1" fill="#141460"/><circle cx="366.5" cy="62.5" r="1" fill="#141460"/><circle cx="369.4" cy="62.5" r="1" fill="#141460"/><circle cx="372.3" cy="62.5" r="1" fill="#141460"/><circle cx="363.6" cy="66.1" r="1" fill="#141460"/><circle cx="366.5" cy="66.1" r="1" fill="#141460"/><circle cx="369.4" cy="66.1" r="1" fill="#141460"/><circle cx="372.3" cy="66.1" r="1" fill="#141460"/><circle cx="363.6" cy="69.7" r="1" fill="#141460"/><circle cx="366.5" cy="69.7" r="1" fill="#141460"/><circle cx="369.4" cy="69.7" r="1" fill="#141460"/><circle cx="372.3" cy="69.7" r="1" fill="#141460"/><path d="M382.3 66.5L385.5 63.4V65.6H390.4V67.4H385.5V69.6Z" fill="#000"/><path d="M404 66.5L400.8 63.4V65.6H395.8V67.4H400.8V69.6Z" fill="#000"/><rect x="598" y="62.3" width="5" height="3" fill="#eee" stroke="#555" stroke-width=".6"/><rect x="595.2" y="64.5" width="9.2" height="6" rx="1.5" fill="#8C8C8C" stroke="#333" stroke-width=".7"/><rect x="596.5" y="67" width="6.5" height="1" fill="#C8D040"/><rect x="596" y="65.5" width="7" height=".8" fill="#ddd"/><path d="M615.5 64L619.8 68.5M619.8 64L615.5 68.5" stroke="#16164E" stroke-width="1.4"/></svg>
<div class="a" style="left:216px;top:313px;width:448px;height:1px;background:#8D8B7A"></div>
<div class="a" style="left:218px;top:316px;width:419px;height:1px;background:#FFFFFF"></div>
<div class="a" style="left:218px;top:317px;width:419px;height:1px;background:#ACA899"></div>
<div class="a" style="left:218px;top:319px;width:419px;height:1px;background:#FFFFFF"></div>
<div class="a" style="left:218px;top:320px;width:419px;height:1px;background:#ACA899"></div>
<div class="a" style="left:637px;top:315px;width:1px;height:5px;background:#ACA899"></div>
<svg class="a" style="left:641px;top:317px;" width="3" height="4" viewBox="0 0 3 4"><path d="M3 0L0 2L3 4Z" fill="#9A9886"/></svg>
<svg class="a" style="left:647px;top:316px;" width="4" height="5" viewBox="0 0 4 5"><path d="M0 2.2H4V3H0Z M.8 0H3.2V2.5H.8Z M1.6 3H2.4V5H1.6Z" fill="#222"/></svg>
<svg class="a" style="left:656px;top:317px;" width="4" height="4" viewBox="0 0 4 4"><path d="M.4 .4L3.6 3.6M3.6 .4L.4 3.6" stroke="#222" stroke-width="1.1"/></svg>
<div class="a" style="left:216px;top:324px;width:447px;height:15px;background:#C3D6F5;border-top:2px solid #7092CC"></div>
<div class="a" style="left:261px;top:325px;width:49px;height:13px;background:#fff;border:1px solid #6F87B5;border-top:none"></div>
<svg class="a" style="left:218px;top:327px;" width="11" height="11" viewBox="0 0 11 11"><rect x="1" y="5" width="9" height="5.5" fill="#fff" stroke="#111" stroke-width=".9"/><path d="M2.8 7V10.5M4.6 7V10.5M6.4 7V10.5M8.2 7V10.5" stroke="#111" stroke-width=".7"/><rect x="1.5" y="1" width="3" height="2.6" fill="#2AAAA0" stroke="#111" stroke-width=".5"/><rect x="5.8" y="1" width="3" height="2.6" fill="#2AAAA0" stroke="#111" stroke-width=".5"/><path d="M3 3.6V5M7.3 3.6V5" stroke="#111" stroke-width=".8"/></svg>
<div class="t" style="left:230.1px;top:330.71px;font-size:6.6px;transform:scaleX(0.955);transform-origin:0 0;color:#6D7A95">Rüstung1</div>
<div class="a" style="left:264px;top:328px;width:9px;height:8px;background:linear-gradient(#CCC,#888);border:1px solid #333;border-radius:1px"></div>
<div class="t" style="left:275.6px;top:330.71px;font-size:6.6px;transform:scaleX(0.955);transform-origin:0 0;">System\96</div>
<svg class="a" style="left:645px;top:329px;" width="14" height="8" viewBox="0 0 14 8"><path d="M3.5 .5L.5 4L3.5 7.5Z" stroke="#8AA4D6" stroke-width=".8" fill="none"/><path d="M9.5 .5L12.5 4L9.5 7.5Z" stroke="#8AA4D6" stroke-width=".8" fill="none"/></svg>
<div class="a" style="left:664px;top:57px;width:1px;height:285px;background:#FFFFFF"></div>
<div class="a" style="left:666px;top:57px;width:1px;height:285px;background:#A6A493"></div>
<div class="a" style="left:668px;top:57px;width:143px;height:1px;background:#FFFFFF"></div>
<div class="a" style="left:671px;top:60px;width:115px;height:1px;background:#FFFFFF"></div>
<div class="a" style="left:671px;top:61px;width:115px;height:1px;background:#ACA899"></div>
<div class="a" style="left:671px;top:63px;width:115px;height:1px;background:#FFFFFF"></div>
<div class="a" style="left:671px;top:64px;width:115px;height:1px;background:#ACA899"></div>
<svg class="a" style="left:788px;top:61px;" width="5" height="3" viewBox="0 0 5 3"><path d="M0 3L2.5 0L5 3Z" fill="#888"/></svg>
<svg class="a" style="left:796px;top:59px;" width="5" height="5" viewBox="0 0 5 5"><path d="M1 0H4V3H5V4H3V5H2V4H0V3H1Z" fill="#333"/></svg>
<svg class="a" style="left:805px;top:59px;" width="5" height="5" viewBox="0 0 5 5"><path d="M.5 .5L4.5 4.5M4.5 .5L.5 4.5" stroke="#222" stroke-width="1.2"/></svg>
<div class="a" style="left:670px;top:68px;width:141px;height:170px;background:#fff;border-top:1px solid #6F6F6F;border-left:1px solid #222"></div>
<svg class="a" style="left:675.5px;top:71.5px;" width="6" height="6" viewBox="0 0 6 6"><rect x=".5" y=".5" width="5" height="5" rx=".5" fill="url(#pg)" stroke="#98A8BC" stroke-width=".8"/><path d="M1.5 3H4.5" stroke="#444" stroke-width=".9"/></svg>
<svg class="a" style="left:684px;top:70px;" width="9" height="8" viewBox="0 0 9 8"><path d="M.6 1H3.8L4.8 2.2H9V7.6H.6Z" fill="#E2B53C" stroke="#B8902A" stroke-width=".7"/><path d="M.9 3.3H8.7V7.3H.9Z" fill="url(#fg)"/></svg>
<div class="a" style="left:695px;top:70px;width:28px;height:9px;background:#ECE9D8"></div>
<div class="t" style="left:696.4px;top:72.21px;font-size:6.6px;transform:scaleX(0.987);transform-origin:0 0;">My lines</div>
<div class="a" style="left:689px;top:79px;width:1px;height:43px;background:repeating-linear-gradient(#A8A8A8 0 1px,transparent 1px 2px)"></div>
<div class="a" style="left:690px;top:84px;width:5px;height:1px;background:repeating-linear-gradient(90deg,#A8A8A8 0 1px,transparent 1px 2px)"></div>
<svg class="a" style="left:687px;top:82px;" width="6" height="6" viewBox="0 0 6 6"><rect x=".5" y=".5" width="5" height="5" rx=".5" fill="url(#pg)" stroke="#98A8BC" stroke-width=".8"/><path d="M1.5 3H4.5" stroke="#444" stroke-width=".9"/><path d="M3 1.5V4.5" stroke="#444" stroke-width=".9"/></svg>
<svg class="a" style="left:695px;top:80px;" width="9" height="8" viewBox="0 0 9 8"><path d="M.6 1H3.8L4.8 2.2H9V7.6H.6Z" fill="#E2B53C" stroke="#B8902A" stroke-width=".7"/><path d="M.9 3.3H8.7V7.3H.9Z" fill="url(#fg)"/></svg>
<div class="t" style="left:707.5px;top:81.71px;font-size:6.6px;transform:scaleX(0.842);transform-origin:0 0;">HL</div>
<div class="a" style="left:690px;top:93px;width:5px;height:1px;background:repeating-linear-gradient(90deg,#A8A8A8 0 1px,transparent 1px 2px)"></div>
<svg class="a" style="left:695px;top:89px;" width="9" height="8" viewBox="0 0 9 8"><path d="M.6 1H3.8L4.8 2.2H9V7.6H.6Z" fill="#E2B53C" stroke="#B8902A" stroke-width=".7"/><path d="M.9 3.3H8.7V7.3H.9Z" fill="url(#fg)"/></svg>
<div class="t" style="left:707.5px;top:90.71px;font-size:6.6px;transform:scaleX(1.026);transform-origin:0 0;">Import</div>
<div class="a" style="left:690px;top:102px;width:5px;height:1px;background:repeating-linear-gradient(90deg,#A8A8A8 0 1px,transparent 1px 2px)"></div>
<svg class="a" style="left:687px;top:100px;" width="6" height="6" viewBox="0 0 6 6"><rect x=".5" y=".5" width="5" height="5" rx=".5" fill="url(#pg)" stroke="#98A8BC" stroke-width=".8"/><path d="M1.5 3H4.5" stroke="#444" stroke-width=".9"/><path d="M3 1.5V4.5" stroke="#444" stroke-width=".9"/></svg>
<svg class="a" style="left:695px;top:98px;" width="9" height="8" viewBox="0 0 9 8"><path d="M.6 1H3.8L4.8 2.2H9V7.6H.6Z" fill="#E2B53C" stroke="#B8902A" stroke-width=".7"/><path d="M.9 3.3H8.7V7.3H.9Z" fill="url(#fg)"/></svg>
<div class="t" style="left:707.5px;top:99.71px;font-size:6.6px;transform:scaleX(0.932);transform-origin:0 0;">Master</div>
<div class="a" style="left:690px;top:112px;width:5px;height:1px;background:repeating-linear-gradient(90deg,#A8A8A8 0 1px,transparent 1px 2px)"></div>
<svg class="a" style="left:687px;top:110px;" width="6" height="6" viewBox="0 0 6 6"><rect x=".5" y=".5" width="5" height="5" rx=".5" fill="url(#pg)" stroke="#98A8BC" stroke-width=".8"/><path d="M1.5 3H4.5" stroke="#444" stroke-width=".9"/><path d="M3 1.5V4.5" stroke="#444" stroke-width=".9"/></svg>
<svg class="a" style="left:695px;top:108px;" width="9" height="8" viewBox="0 0 9 8"><path d="M.6 1H3.8L4.8 2.2H9V7.6H.6Z" fill="#E2B53C" stroke="#B8902A" stroke-width=".7"/><path d="M.9 3.3H8.7V7.3H.9Z" fill="url(#fg)"/></svg>
<div class="t" style="left:707.5px;top:109.71px;font-size:6.6px;transform:scaleX(0.873);transform-origin:0 0;">System</div>
<div class="a" style="left:690px;top:121px;width:5px;height:1px;background:repeating-linear-gradient(90deg,#A8A8A8 0 1px,transparent 1px 2px)"></div>
<div class="a" style="left:695px;top:118px;width:10px;height:7px;background:#ddd;border:1px solid #222"></div>
<div class="a" style="left:696px;top:116px;width:4px;height:3px;background:#1A9A9A"></div>
<div class="t" style="left:707.5px;top:118.71px;font-size:6.6px;transform:scaleX(0.849);transform-origin:0 0;">SIPLACE D2</div>
<div class="a" style="left:670px;top:237px;width:141px;height:1px;background:#555"></div>
<div class="t" style="left:692px;top:247.21px;font-size:6.6px;transform:scaleX(0.955);transform-origin:0 0;">Filter</div>
<div class="a" style="left:714px;top:243px;width:48px;height:14px;background:#fff;border:1px solid #9DB5CF"></div>
<div class="a" style="left:765px;top:246px;width:9px;height:7px;background:#E2E0D4;border:1px solid #CAC7B8"></div>
<div class="a" style="left:780px;top:246px;width:9px;height:7px;background:#E2E0D4;border:1px solid #CAC7B8"></div>
<svg class="a" style="left:766px;top:247px;" width="7" height="5" viewBox="0 0 7 5"><rect x="1" y=".8" width="5" height="3.4" fill="#9A9888"/><path d="M1.5 3L3 1.5L4.5 2.5" stroke="#E8E6DA" stroke-width=".7" fill="none"/></svg>
<svg class="a" style="left:781px;top:247px;" width="7" height="5" viewBox="0 0 7 5"><path d="M1.5 .8L5.5 4.2M5.5 .8L1.5 4.2" stroke="#8A8878" stroke-width="1"/></svg>
<div class="a" style="left:692px;top:259px;width:8px;height:8px;border:1px solid #C8C6BA;background:#F2F1EA"></div>
<svg class="a" style="left:693px;top:260px;" width="6" height="6" viewBox="0 0 6 6"><path d="M1 3L2.5 4.5L5 1.5" stroke="#C0C0B0" stroke-width="1.1" fill="none"/></svg>
<div class="t" style="left:703px;top:260.71px;font-size:6.6px;transform:scaleX(0.955);transform-origin:0 0;color:#A9A796">Expand all nodes on filtering</div>
<div class="a" style="left:672px;top:274px;width:138px;height:1px;background:#D8D5C4"></div>
<div class="a" style="left:672px;top:275px;width:138px;height:1px;background:#FFFFFF"></div>
<div class="a" style="left:688px;top:282px;width:101px;height:32px;border-style:solid;border-width:2px 1px 1px 2px;border-color:#A5A391 #FFFFFF #FFFFFF #A5A391"></div>
<div class="a" style="left:670px;top:68px;width:1px;height:254px;background:#222"></div>
<div class="a" style="left:670px;top:321px;width:141px;height:1px;background:#000"></div>
<div class="a" style="left:672px;top:324px;width:21px;height:15px;background:linear-gradient(#FDFDFB,#EEEDE5);border:1px solid #D5D2C3;border-right-color:#A9A696;border-bottom-color:#A9A696;border-radius:2px"></div>
<div class="t" style="left:686.6px;top:330.71px;font-size:6.6px;transform:scaleX(0.955);transform-origin:0 0;color:#8A8878">F</div>
<div class="a" style="left:694px;top:324px;width:21px;height:15px;background:linear-gradient(#FDFDFB,#EEEDE5);border:1px solid #D5D2C3;border-right-color:#A9A696;border-bottom-color:#A9A696;border-radius:2px"></div>
<div class="t" style="left:708.6px;top:330.71px;font-size:6.6px;transform:scaleX(0.955);transform-origin:0 0;color:#8A8878">T</div>
<div class="a" style="left:716px;top:324px;width:21px;height:15px;background:linear-gradient(#FDFDFB,#EEEDE5);border:1px solid #D5D2C3;border-right-color:#A9A696;border-bottom-color:#A9A696;border-radius:2px"></div>
<div class="t" style="left:730px;top:330.71px;font-size:6.6px;transform:scaleX(0.955);transform-origin:0 0;color:#8A8878">S</div>
<div class="a" style="left:740px;top:324px;width:21px;height:15px;background:linear-gradient(#FDFDFB,#EEEDE5);border:1px solid #D5D2C3;border-right-color:#A9A696;border-bottom-color:#A9A696;border-radius:2px"></div>
<div class="t" style="left:752.5px;top:330.71px;font-size:6.6px;transform:scaleX(0.955);transform-origin:0 0;color:#222">U</div>
<div class="a" style="left:760px;top:324px;width:21px;height:15px;background:linear-gradient(#FDFDFB,#EEEDE5);border:1px solid #D5D2C3;border-right-color:#A9A696;border-bottom-color:#A9A696;border-radius:2px"></div>
<div class="t" style="left:773.9px;top:330.71px;font-size:6.6px;transform:scaleX(0.955);transform-origin:0 0;color:#8A8878">N</div>
<div class="a" style="left:783px;top:324px;width:21px;height:15px;background:linear-gradient(#FDFDFB,#EEEDE5);border:1px solid #D5D2C3;border-right-color:#A9A696;border-bottom-color:#A9A696;border-radius:2px"></div>
<div class="t" style="left:797.6px;top:330.71px;font-size:6.6px;transform:scaleX(0.955);transform-origin:0 0;color:#8A8878">C</div>
<svg class="a" style="left:0;top:0" width="852" height="593" viewBox="0 0 852 593"><rect x="675" y="326.5" width="6.8" height="10" fill="#B8B8B8" stroke="#333" stroke-width=".8"/><path d="M676.5 328.5H680.5M676.5 330.5H680.5M676.5 332.5H680.5M676.5 334.5H680.5" stroke="#555" stroke-width=".7"/><rect x="675" y="329" width="1.4" height="1.4" fill="#111"/><rect x="696" y="326.5" width="9.2" height="9.5" fill="#0A5A14" stroke="#052A08" stroke-width=".8"/><path d="M697.5 328L699.5 330M703.5 328L701.5 330M697.5 334.5L699.5 332.5M703.5 334.5L701.5 332.5" stroke="#4AD050" stroke-width=".9"/><rect x="721" y="330.5" width="5.5" height="5" fill="#fff" stroke="#111" stroke-width="1"/><path d="M718 333.5L721 331.8V335.2Z" fill="#333"/><rect x="722.5" y="327" width="2.5" height="2.5" fill="#20A0A0"/><path d="M723.7 329.5V330.5" stroke="#111" stroke-width=".8"/><rect x="740.5" y="331" width="9" height="5" fill="#fff" stroke="#111" stroke-width=".9"/><rect x="742" y="327" width="2.5" height="2.5" fill="#20A0A0"/><rect x="745.5" y="327" width="2.5" height="2.5" fill="#20A0A0"/><rect x="741.5" y="329.5" width="7" height="1.5" fill="#222"/><path d="M742.5 333V336M744.5 333V336M746.5 333V336" stroke="#111" stroke-width=".7"/><path d="M763 329.5H770.5L767.8 333.5V336.5L766.7 337.5L765.6 336.5V333.5Z" fill="#E8E8E8" stroke="#111" stroke-width=".9"/><rect x="764" y="326.5" width="5.5" height="3" fill="#2020A0"/><rect x="763.5" y="331" width="6.5" height="1" fill="#555"/><rect x="784.5" y="327.5" width="8.5" height="8" fill="#6A6A6A"/><rect x="786" y="330" width="5.5" height="3.5" fill="#E8E8E8" stroke="#111" stroke-width=".7"/></svg>
<div class="a" style="left:49px;top:344px;width:762px;height:1px;background:#8D8B7A"></div>
<div class="a" style="left:50px;top:346px;width:761px;height:184px;border-left:1px solid #86A2CC;border-top:2px solid #93AEDB"></div>
<div class="a" style="left:55px;top:355px;width:726px;height:163px;border:1px solid #D0D0BF;border-radius:3px"></div>
<div class="a" style="left:59.7px;top:351px;width:30px;height:8px;background:#ECE9D8"></div>
<div class="t" style="left:60.7px;top:352.21px;font-size:6.6px;transform:scaleX(0.955);transform-origin:0 0;color:#1A48C0"><u>P</u>roperties</div>
<div class="t" style="left:59.7px;top:362.61px;font-size:6.6px;transform:scaleX(0.915);transform-origin:0 0;">Placement Process</div>
<div class="a" style="left:141px;top:357px;width:66px;height:14px;background:#fff;border:1px solid #7F9DB9"></div>
<div class="a" style="left:196px;top:358px;width:10px;height:12px;background:linear-gradient(#DDE7FC,#B9CCF7);border-radius:1px"></div>
<svg class="a" style="left:198px;top:362px;" width="6" height="4" viewBox="0 0 6 4"><path d="M.8 .8L3 3L5.2 .8" stroke="#4D6185" stroke-width="1.3" fill="none"/></svg>
<div class="t" style="left:143.5px;top:362.71px;font-size:6.6px;transform:scaleX(1.024);transform-origin:0 0;">01005</div>
<div class="t" style="left:61.2px;top:378.61px;font-size:6.6px;transform:scaleX(0.859);transform-origin:0 0;">Shape</div>
<div class="a" style="left:98px;top:374px;width:109px;height:14px;background:#fff;border:1px solid #7F9DB9"></div>
<div class="a" style="left:196px;top:375px;width:10px;height:12px;background:linear-gradient(#DDE7FC,#B9CCF7);border-radius:1px"></div>
<svg class="a" style="left:198px;top:379px;" width="6" height="4" viewBox="0 0 6 4"><path d="M.8 .8L3 3L5.2 .8" stroke="#4D6185" stroke-width="1.3" fill="none"/></svg>
<div class="t" style="left:100.5px;top:379.71px;font-size:6.6px;transform:scaleX(0.925);transform-origin:0 0;">Rectangle</div>
<div class="t" style="left:224.6px;top:379.81px;font-size:6.6px;transform:scaleX(0.970);transform-origin:0 0;">Color</div>
<div class="a" style="left:246px;top:373px;width:18px;height:13px;background:#000;border:1px solid #fff;outline:1px solid #BBB"></div>
<div class="a" style="left:265px;top:373px;width:13px;height:13px;background:linear-gradient(#FFF,#ECEBE4);border:1px solid #7F9DB9;border-radius:2px"></div>
<div class="t" style="left:268.5px;top:377.21px;font-size:6.6px;transform:scaleX(0.955);transform-origin:0 0;color:#555">...</div>
<div class="t" style="left:61.2px;top:396.91px;font-size:6.6px;transform:scaleX(0.977);transform-origin:0 0;">Station reference number</div>
<div class="a" style="left:155.5px;top:391px;width:38px;height:14px;background:#fff;border:1px solid #7F9DB9"></div>
<div class="t" style="left:157.5px;top:396.71px;font-size:6.6px;transform:scaleX(0.955);transform-origin:0 0;">96</div>
<div class="t" style="left:200px;top:396.91px;font-size:6.6px;transform:scaleX(0.955);transform-origin:0 0;">gf</div>
<div class="a" style="left:61px;top:413px;width:218px;height:103px;border:1px solid #D0D0BF;border-radius:3px"></div>
<div class="a" style="left:64.6px;top:408.7px;width:68.6px;height:8px;background:#ECE9D8"></div>
<div class="t" style="left:65.6px;top:409.91px;font-size:6.6px;transform:scaleX(0.951);transform-origin:0 0;color:#1A48C0"><u>O</u>verall size (with leads)</div>
<div class="t" style="right:738.3px;top:428.41px;font-size:6.6px;transform:scaleX(0.938);transform-origin:100% 0;">Length (X)</div>
<div class="a" style="left:116px;top:425px;width:29px;height:12px;background:#ECE9D8;border:1px solid #C9C7BA"></div>
<div class="t" style="left:118px;top:428.71px;font-size:6.6px;transform:scaleX(0.872);transform-origin:0 0;color:#ACA899">0.390</div>
<div class="t" style="left:145.2px;top:429.21px;font-size:6.6px;transform:scaleX(0.955);transform-origin:0 0;">±</div>
<div class="a" style="left:149.5px;top:425px;width:28px;height:12px;background:#fff;border:1px solid #3A3A3A"></div>
<div class="t" style="left:151.5px;top:428.71px;font-size:6.6px;transform:scaleX(0.908);transform-origin:0 0;">0.050</div>
<div class="t" style="left:179.2px;top:429.21px;font-size:6.6px;transform:scaleX(0.928);transform-origin:0 0;">mm</div>
<div class="t" style="right:738.3px;top:444.41px;font-size:6.6px;transform:scaleX(0.960);transform-origin:100% 0;">Width (Y)</div>
<div class="a" style="left:116px;top:441px;width:29px;height:12px;background:#ECE9D8;border:1px solid #C9C7BA"></div>
<div class="t" style="left:118px;top:444.71px;font-size:6.6px;transform:scaleX(0.872);transform-origin:0 0;color:#ACA899">0.190</div>
<div class="t" style="left:145.2px;top:445.21px;font-size:6.6px;transform:scaleX(0.955);transform-origin:0 0;">±</div>
<div class="a" style="left:149.5px;top:441px;width:28px;height:12px;background:#fff;border:1px solid #3A3A3A"></div>
<div class="t" style="left:151.5px;top:444.71px;font-size:6.6px;transform:scaleX(0.908);transform-origin:0 0;">0.040</div>
<div class="t" style="left:179.2px;top:445.21px;font-size:6.6px;transform:scaleX(0.928);transform-origin:0 0;">mm</div>
<div class="t" style="right:738.3px;top:460.41px;font-size:6.6px;transform:scaleX(0.958);transform-origin:100% 0;">Height (Z)</div>
<div class="a" style="left:116px;top:457px;width:29px;height:12px;background:#ECE9D8;border:1px solid #C9C7BA"></div>
<div class="t" style="left:118px;top:460.71px;font-size:6.6px;transform:scaleX(0.872);transform-origin:0 0;color:#ACA899">0.120</div>
<div class="t" style="left:145.2px;top:461.21px;font-size:6.6px;transform:scaleX(0.955);transform-origin:0 0;">±</div>
<div class="a" style="left:149.5px;top:457px;width:28px;height:12px;background:#fff;border:1px solid #3A3A3A"></div>
<div class="t" style="left:151.5px;top:460.71px;font-size:6.6px;transform:scaleX(0.908);transform-origin:0 0;">0.040</div>
<div class="t" style="left:179.2px;top:461.21px;font-size:6.6px;transform:scaleX(0.928);transform-origin:0 0;">mm</div>
<div class="a" style="left:286px;top:363px;width:170px;height:152px;border:1px solid #D0D0BF;border-radius:3px"></div>
<div class="a" style="left:289.3px;top:358.2px;width:70.80000000000001px;height:8px;background:#ECE9D8"></div>
<div class="t" style="left:290.3px;top:359.41px;font-size:6.6px;transform:scaleX(0.938);transform-origin:0 0;color:#1A48C0">Body size (without leads)</div>
<div class="a" style="left:289px;top:367px;width:162px;height:146px;border-top:1px solid #fff;border-left:1px solid #fff;border-right:1px solid #8D8B7A;border-bottom:1px solid #E6C870;box-shadow:0 1px 0 #fff"></div>
<div class="t" style="right:476.5px;top:377.21px;font-size:6.6px;transform:scaleX(0.928);transform-origin:100% 0;">Length (X)</div>
<div class="a" style="left:378px;top:373px;width:33px;height:13px;background:#fff;border:1px solid #7F9DB9"></div>
<div class="t" style="left:380px;top:377.71px;font-size:6.6px;transform:scaleX(0.902);transform-origin:0 0;">0.390</div>
<div class="t" style="left:412.3px;top:377.21px;font-size:6.6px;transform:scaleX(0.873);transform-origin:0 0;">mm</div>
<div class="t" style="right:476.5px;top:393.41px;font-size:6.6px;transform:scaleX(0.920);transform-origin:100% 0;">Width (Y)</div>
<div class="a" style="left:378px;top:389px;width:33px;height:13px;background:#fff;border:1px solid #7F9DB9"></div>
<div class="t" style="left:380px;top:393.71px;font-size:6.6px;transform:scaleX(0.902);transform-origin:0 0;">0.190</div>
<div class="t" style="left:412.3px;top:393.21px;font-size:6.6px;transform:scaleX(0.873);transform-origin:0 0;">mm</div>
<div class="t" style="right:476.5px;top:409.61px;font-size:6.6px;transform:scaleX(0.948);transform-origin:100% 0;">Height (Z)</div>
<div class="a" style="left:378px;top:405px;width:33px;height:13px;background:#fff;border:1px solid #7F9DB9"></div>
<div class="t" style="left:380px;top:409.71px;font-size:6.6px;transform:scaleX(0.902);transform-origin:0 0;">0.120</div>
<div class="t" style="left:412.3px;top:409.21px;font-size:6.6px;transform:scaleX(0.873);transform-origin:0 0;">mm</div>
<div class="a" style="left:296px;top:433px;width:149px;height:27px;border:1px solid #D0D0BF;border-radius:3px"></div>
<div class="a" style="left:301.1px;top:429px;width:75.79999999999995px;height:8px;background:#ECE9D8"></div>
<div class="t" style="left:302.1px;top:430.21px;font-size:6.6px;transform:scaleX(0.996);transform-origin:0 0;color:#1A48C0">Component center height</div>
<div class="t" style="right:506.5px;top:444.91px;font-size:6.6px;transform:scaleX(0.865);transform-origin:100% 0;">Thickness</div>
<div class="a" style="left:347px;top:441px;width:29px;height:13px;background:#fff;border:1px solid #7F9DB9"></div>
<div class="t" style="left:349px;top:445.71px;font-size:6.6px;transform:scaleX(0.872);transform-origin:0 0;">0.120</div>
<div class="t" style="left:376.4px;top:444.91px;font-size:6.6px;transform:scaleX(0.955);transform-origin:0 0;">±</div>
<div class="a" style="left:380px;top:441px;width:29px;height:13px;background:#fff;border:1px solid #7F9DB9"></div>
<div class="t" style="left:382px;top:445.71px;font-size:6.6px;transform:scaleX(0.938);transform-origin:0 0;">0.040</div>
<div class="t" style="left:410.1px;top:444.91px;font-size:6.6px;transform:scaleX(0.846);transform-origin:0 0;">mm</div>
<div class="a" style="left:466px;top:362px;width:152px;height:44px;border:1px solid #D0D0BF;border-radius:3px"></div>
<div class="a" style="left:469.7px;top:358.5px;width:43.900000000000034px;height:8px;background:#ECE9D8"></div>
<div class="t" style="left:470.7px;top:359.71px;font-size:6.6px;transform:scaleX(0.944);transform-origin:0 0;color:#1A48C0">Polarity <u>m</u>arker</div>
<div class="t" style="left:481px;top:379.41px;font-size:6.6px;transform:scaleX(0.902);transform-origin:0 0;">Type</div>
<div class="a" style="left:518px;top:373px;width:91px;height:14px;background:#fff;border:1px solid #7F9DB9"></div>
<div class="a" style="left:598px;top:374px;width:10px;height:12px;background:linear-gradient(#DDE7FC,#B9CCF7);border-radius:1px"></div>
<svg class="a" style="left:600px;top:378px;" width="6" height="4" viewBox="0 0 6 4"><path d="M.8 .8L3 3L5.2 .8" stroke="#4D6185" stroke-width="1.3" fill="none"/></svg>
<div class="t" style="left:520.5px;top:378.71px;font-size:6.6px;transform:scaleX(0.982);transform-origin:0 0;">No Mark</div>
<div class="t" style="left:481px;top:392.31px;font-size:6.6px;transform:scaleX(0.922);transform-origin:0 0;">Location</div>
<div class="a" style="left:518px;top:389px;width:91px;height:13px;background:#ECE9D8;border:1px solid #C9C7BA"></div>
<svg class="a" style="left:600px;top:393px;" width="6" height="4" viewBox="0 0 6 4"><path d="M.8 .8L3 3L5.2 .8" stroke="#C9C7BA" stroke-width="1.3" fill="none"/></svg>
<div class="t" style="left:520.5px;top:393.71px;font-size:6.6px;transform:scaleX(0.870);transform-origin:0 0;color:#ACA899">Unused</div>
<div class="a" style="left:466px;top:412px;width:152px;height:90px;border:1px solid #D0D0BF;border-radius:3px"></div>
<div class="a" style="left:469.7px;top:408.5px;width:40px;height:8px;background:#ECE9D8"></div>
<div class="t" style="left:470.7px;top:409.71px;font-size:6.6px;transform:scaleX(0.955);transform-origin:0 0;color:#1A48C0">SIPLACE Vision</div>
<div class="t" style="left:476.2px;top:422.81px;font-size:6.6px;transform:scaleX(0.930);transform-origin:0 0;">Type</div>
<div class="a" style="left:518px;top:419px;width:91px;height:13px;background:#fff;border:1px solid #7F9DB9"></div>
<div class="a" style="left:598px;top:420px;width:10px;height:11px;background:linear-gradient(#DDE7FC,#B9CCF7);border-radius:1px"></div>
<svg class="a" style="left:600px;top:423px;" width="6" height="4" viewBox="0 0 6 4"><path d="M.8 .8L3 3L5.2 .8" stroke="#4D6185" stroke-width="1.3" fill="none"/></svg>
<div class="t" style="left:520.5px;top:423.71px;font-size:6.6px;transform:scaleX(0.950);transform-origin:0 0;">Undefined</div>
<div class="a" style="left:475px;top:434px;width:8px;height:8px;background:#F4F3EE;border:1px solid #D5D3C6"></div>
<div class="t" style="left:485.6px;top:436.01px;font-size:6.6px;transform:scaleX(0.927);transform-origin:0 0;color:#ACA899">Inspection</div>
<div class="a" style="left:475px;top:444px;width:8px;height:8px;background:#F4F3EE;border:1px solid #D5D3C6"></div>
<div class="t" style="left:485.6px;top:446.01px;font-size:6.6px;transform:scaleX(0.980);transform-origin:0 0;color:#ACA899">Detect flipped Component</div>
<div class="a" style="left:475px;top:456px;width:8px;height:8px;background:linear-gradient(135deg,#DCDCD7,#FFF);border:1px solid #7090B8"></div>
<svg class="a" style="left:476px;top:457px;" width="6" height="6" viewBox="0 0 6 6"><path d="M1 3L2.5 4.5L5 1" stroke="#21A121" stroke-width="1.3" fill="none"/></svg>
<div class="t" style="left:485.6px;top:458.01px;font-size:6.6px;transform:scaleX(0.924);transform-origin:0 0;">Requires separate group descriptions</div>
<div class="a" style="left:475px;top:466px;width:8px;height:8px;background:linear-gradient(135deg,#DCDCD7,#FFF);border:1px solid #7090B8"></div>
<div class="t" style="left:485.6px;top:468.01px;font-size:6.6px;transform:scaleX(0.954);transform-origin:0 0;">Stop immediately on pickup error</div>
<div class="a" style="left:475px;top:477px;width:8px;height:8px;background:linear-gradient(135deg,#DCDCD7,#FFF);border:1px solid #7090B8"></div>
<div class="t" style="left:485.6px;top:479.01px;font-size:6.6px;transform:scaleX(0.966);transform-origin:0 0;">Incomplete</div>
<div class="a" style="left:475px;top:488px;width:8px;height:8px;background:linear-gradient(135deg,#DCDCD7,#FFF);border:1px solid #7090B8"></div>
<div class="t" style="left:485.6px;top:490.01px;font-size:6.6px;transform:scaleX(0.938);transform-origin:0 0;">Deactivate check for minimal CS structures</div>
<div class="a" style="left:625px;top:362px;width:152px;height:52px;border:1px solid #D0D0BF;border-radius:3px"></div>
<div class="a" style="left:628px;top:358.8px;width:100.70000000000005px;height:8px;background:#ECE9D8"></div>
<div class="t" style="left:629px;top:360.01px;font-size:6.6px;transform:scaleX(0.916);transform-origin:0 0;color:#1A48C0">SIPLACE Vision Compatibility Check</div>
<div class="a" style="left:671px;top:370px;width:44px;height:13px;background:linear-gradient(#FFF,#F3F2EC 80%,#D6D0C5);border:1px solid #5D7A9C;border-radius:2px"></div>
<div class="t" style="left:684.5px;top:374.81px;font-size:6.6px;transform:scaleX(0.935);transform-origin:0 0;">Check</div>
<div class="t" style="left:633px;top:388.91px;font-size:6.6px;transform:scaleX(0.867);transform-origin:0 0;">SIPLACE Pro Vision System:</div>
<div class="a" style="left:634px;top:397px;width:134px;height:13px;background:#ECE9D8;border:1px solid #9DB0C2"></div>
<div class="t" style="left:636px;top:401.71px;font-size:6.6px;transform:scaleX(0.813);transform-origin:0 0;color:#ACA899">Siplace Vision</div>
<svg class="a" style="left:0;top:0" width="852" height="593" viewBox="0 0 852 593"><rect x="51" y="346" width="168.5" height="25.5" rx="14" ry="12.75" fill="none" stroke="#F00" stroke-width="2.2"/></svg>
<div class="a" style="left:49px;top:530px;width:762px;height:13px;background:#C3D6F5;border-top:1px solid #7092CC"></div>
<div class="a" style="left:92px;top:530px;width:37px;height:13px;background:#fff;border:1px solid #6F87B5;border-top:none"></div>
<div class="t" style="left:53.9px;top:536.21px;font-size:6.6px;transform:scaleX(0.946);transform-origin:0 0;color:#5A6B8C">Notifications</div>
<div class="t" style="left:95px;top:536.21px;font-size:6.6px;transform:scaleX(0.924);transform-origin:0 0;">System \96</div>
<div class="t" style="left:132.5px;top:536.21px;font-size:6.6px;transform:scaleX(0.900);transform-origin:0 0;color:#5A6B8C">ICOS Lead Groups</div>
<div class="t" style="left:190.6px;top:536.21px;font-size:6.6px;transform:scaleX(0.882);transform-origin:0 0;color:#5A6B8C">SIPLACE Vision Lead Groups</div>
<div class="t" style="left:275px;top:536.21px;font-size:6.6px;transform:scaleX(0.954);transform-origin:0 0;color:#5A6B8C">Nozzles</div>
<div class="t" style="left:303.3px;top:536.21px;font-size:6.6px;transform:scaleX(0.885);transform-origin:0 0;color:#5A6B8C">Cameras</div>
<div class="t" style="left:333.5px;top:536.21px;font-size:6.6px;transform:scaleX(0.961);transform-origin:0 0;color:#5A6B8C">Acceleration</div>
<div class="t" style="left:375.6px;top:536.21px;font-size:6.6px;transform:scaleX(0.895);transform-origin:0 0;color:#5A6B8C">Basic Handling</div>
<div class="t" style="left:423.2px;top:536.21px;font-size:6.6px;transform:scaleX(0.919);transform-origin:0 0;color:#5A6B8C">Advanced Handling</div>
<div class="t" style="left:483.4px;top:536.21px;font-size:6.6px;transform:scaleX(0.950);transform-origin:0 0;color:#5A6B8C">Feeders</div>
<div class="t" style="left:512px;top:536.21px;font-size:6.6px;transform:scaleX(0.956);transform-origin:0 0;color:#5A6B8C">Comments</div>
<div class="a" style="left:131px;top:533px;width:1px;height:9px;background:#A2B6DA"></div>
<div class="a" style="left:185px;top:533px;width:1px;height:9px;background:#A2B6DA"></div>
<div class="a" style="left:271px;top:533px;width:1px;height:9px;background:#A2B6DA"></div>
<div class="a" style="left:300px;top:533px;width:1px;height:9px;background:#A2B6DA"></div>
<div class="a" style="left:330px;top:533px;width:1px;height:9px;background:#A2B6DA"></div>
<div class="a" style="left:372px;top:533px;width:1px;height:9px;background:#A2B6DA"></div>
<div class="a" style="left:419px;top:533px;width:1px;height:9px;background:#A2B6DA"></div>
<div class="a" style="left:480px;top:533px;width:1px;height:9px;background:#A2B6DA"></div>
<div class="a" style="left:509px;top:533px;width:1px;height:9px;background:#A2B6DA"></div>
<div class="a" style="left:49px;top:548px;width:762px;height:1px;background:#8D8B7A"></div>
<div class="a" style="left:49px;top:549px;width:762px;height:1px;background:#FFFFFF"></div>
<div class="t" style="left:51.7px;top:553.51px;font-size:6.6px;transform:scaleX(0.950);transform-origin:0 0;">For Help, press F1</div>
<svg class="a" style="left:588px;top:550px;" width="10" height="11" viewBox="0 0 10 11"><circle cx="5" cy="3.6" r="2.8" fill="#222"/><path d="M2.6 3.5C3 1.5 7 1.5 7.4 3.5" fill="#fff" opacity=".6"/><path d="M1 10.5C1 6.5 9 6.5 9 10.5Z" fill="#1A2FA0"/><rect x="4" y="6" width="2" height="2" fill="#fff"/></svg>
<div class="t" style="left:599.7px;top:553.51px;font-size:6.6px;transform:scaleX(0.939);transform-origin:0 0;">User:</div>
<div class="t" style="left:619.4px;top:553.51px;font-size:6.6px;transform:scaleX(0.931);transform-origin:0 0;">Service</div>
<svg class="a" style="left:659px;top:550px;" width="12" height="11" viewBox="0 0 12 11"><rect x="0.5" y="1" width="6" height="5" fill="#3D8FD0" stroke="#1E5A9A" stroke-width=".6"/><rect x="5" y="3" width="6" height="7.5" fill="#A8D4F2" stroke="#4A80B0" stroke-width=".6"/><path d="M2 8L5 6" stroke="#2A9A2A" stroke-width="1.2"/></svg>
<div class="t" style="left:671.5px;top:553.51px;font-size:6.6px;transform:scaleX(0.997);transform-origin:0 0;">Server:</div>
<div class="t" style="left:697.3px;top:553.51px;font-size:6.6px;transform:scaleX(0.885);transform-origin:0 0;">VM-XP-SP1A-MSMQ\SIPLACE_MSDE</div>
<div class="a" style="left:49px;top:563px;width:762px;height:17px;background:linear-gradient(#3A81F3 0,#2A64DE 2px,#245EDC 40%,#2157D3 80%,#1A4CB8 100%)"></div>
<div class="a" style="left:49px;top:563px;width:58px;height:17px;background:linear-gradient(#48A848 0,#37973A 30%,#2D8A30 80%,#267A28);border-radius:0 8px 8px 0"></div>
<svg class="a" style="left:55px;top:567px;" width="10" height="10" viewBox="0 0 10 10"><rect x="0" y="0" width="4.5" height="4.5" fill="#F26522"/><rect x="5.2" y="0" width="4.5" height="4.5" fill="#7FBA00"/><rect x="0" y="5.2" width="4.5" height="4.5" fill="#2C7FD6"/><rect x="5.2" y="5.2" width="4.5" height="4.5" fill="#FFC200"/></svg>
<div class="t" style="left:68.8px;top:568.08px;font-size:10.3px;color:#fff;font-weight:bold;font-style:italic">Start</div>
<div class="a" style="left:113px;top:566px;width:95px;height:14px;background:#1E4EC0;border-radius:2px"></div>
<div class="a" style="left:120px;top:568px;width:9px;height:7px;background:#2DB02D;border:1px solid #0C5A0C"></div>
<div class="t" style="left:130.3px;top:571.21px;font-size:6.6px;transform:scaleX(0.955);transform-origin:0 0;color:#fff">SIPLACE Pro Desk - [...</div>
<div class="t" style="left:725.6px;top:570.71px;font-size:6.6px;transform:scaleX(0.955);transform-origin:0 0;color:#fff">DE</div>
<div class="a" style="left:747px;top:563px;width:64px;height:17px;background:linear-gradient(#1AA2F0,#0F8EE6 50%,#0E83DA);border-left:1px solid #0D4BA8"></div>
<div class="t" style="left:787.7px;top:570.71px;font-size:6.6px;transform:scaleX(0.981);transform-origin:0 0;color:#DDEBFF">13:58</div>
<svg class="a" style="left:752px;top:567px;" width="32" height="11" viewBox="0 0 32 11"><rect x="1" y="1" width="3" height="5" fill="#3A8A3A"/><rect x="4" y="3" width="3" height="5" fill="#2A6AB0"/><circle cx="6.5" cy="8" r="2" fill="#E03020"/><rect x="11" y="1" width="4.5" height="8.5" fill="#B8B8B8" stroke="#555" stroke-width=".5"/><circle cx="17" cy="7.5" r="2.5" fill="#fff"/><path d="M16 6.3L18.5 7.5L16 8.7Z" fill="#2A9A2A"/><rect x="23.5" y="3" width="6.5" height="6" fill="#2A5AB0" stroke="#D0E0FF" stroke-width=".8"/><rect x="25.5" y="1" width="5" height="4" fill="none" stroke="#D0E0FF" stroke-width=".8"/></svg>
</body></html>
